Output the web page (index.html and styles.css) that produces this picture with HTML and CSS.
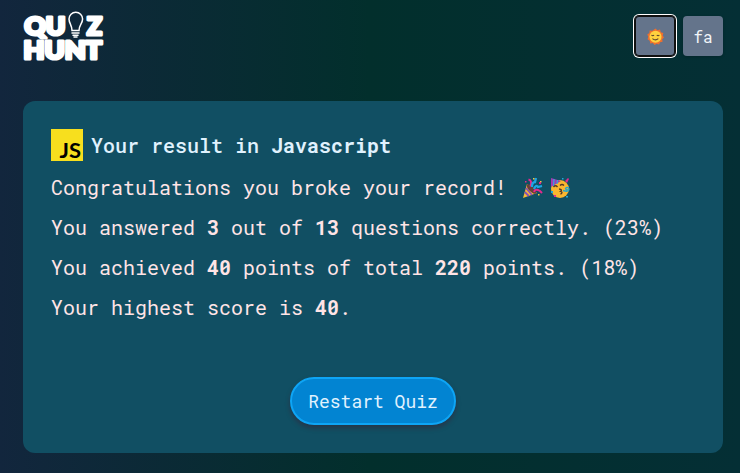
FILE: index.html
```html
<!DOCTYPE html>
<html lang="en">
<head>
<meta charset="utf-8">
<title>Quiz Hunt</title>
<link rel="stylesheet" href="styles.css">
</head>
<body>
<header class="topbar">
  <svg class="logo" viewBox="0 0 82 54" role="img" aria-label="Quiz Hunt">
    <g class="logo-text">
      <text x="1.500" y="24.500" textLength="41" lengthAdjust="spacingAndGlyphs">QU</text>
      <text x="64" y="24.500" textLength="15" lengthAdjust="spacingAndGlyphs">Z</text>
      <text x="0.500" y="49.300" textLength="78.500" lengthAdjust="spacingAndGlyphs">HUNT</text>
    </g>
    <g fill="none" stroke="#fff" stroke-width="1.500" stroke-linecap="round">
      <path d="M49 20.500C49 15 46 13.500 46 9a6.800 6.800 0 0 1 13.600 0C59.600 13.500 56 15 56 20.500Z"/>
      <path d="M49 23h7M50 25.300h5M51 27h3"/>
    </g>
  </svg>
  <nav class="actions">
    <button class="tool focused" aria-label="Light theme">
      <svg class="sun" viewBox="0 0 18 18">
        <path fill="#ef702d" d="M9 .5l2 2 2.800-.8.8 2.700 2.700.8-.7 2.700L18 10l-1.900 2 .4 2.500-2.600.7-1.100 2.200-2.600-.7L8 18l-1.800-2-2.800.3-.5-2.700L.6 12l.8-2.700L.3 7l2.200-1.700.3-2.700 2.900.2Z"/>
        <circle cx="9" cy="9.200" r="6.400" fill="#ffd13e"/>
        <path d="M4.700 7.600q1.500 1.200 2.800 0M10.300 7.600q1.500 1.200 2.800 0M5.800 11.200q3.200 2.800 6.200 0" fill="none" stroke="#59432c" stroke-width="1.100"/>
      </svg>
    </button>
    <button class="tool">fa</button>
  </nav>
</header>
<main class="card">
  <h1 class="title">
    <svg class="js" viewBox="0 0 32 32" role="img" aria-label="JS"><rect width="32" height="32" fill="#f7df1e"/><text x="8.500" y="29.300" textLength="21.500" lengthAdjust="spacingAndGlyphs">JS</text></svg>
    <span>Your result in <b>Javascript</b></span>
  </h1>
  <div class="stats">
    <p class="line">Congratulations you broke your record!
      <svg class="emoji party" viewBox="0 0 22 22">
        <path fill="#f8b936" d="M5 7 1 21l14-5Z"/>
        <path stroke="#8751b5" stroke-width="1.800" d="m4 11 6 7M2.800 15l4 4"/>
        <ellipse cx="9.500" cy="12" rx="2.600" ry="6.200" transform="rotate(-45 9.500 12)" fill="#68413b"/>
        <path fill="none" stroke="#e5298e" stroke-width="2" d="M6.500 2.500q4 1 2 7M12 15q1-4 6-1l2 2"/>
        <path fill="none" stroke="#1da5e4" stroke-width="2.300" d="M10 10q0-5 3-5l1-4M12 12q2-5 4-2l4-1"/>
        <path fill="#f8c63e" d="M11 1h1.500v1.500H11zM18 4h1.500v1.500H18zM16 17h1.500v1.500H16z"/>
        <path fill="#e5298e" d="M3 4h1.500v1.500H3zM17 5h2v2h-2z"/>
      </svg><svg class="emoji" viewBox="0 0 22 22">
        <circle cx="11" cy="12" r="9" fill="#fbb62f"/>
        <path fill="#a23bb1" d="M2 1 12 4 2 10Z"/><path stroke="#3da0dc" stroke-width="1.300" d="m5 2-.5 7M8.500 3 8 7"/>
        <path fill="none" stroke="#52392a" stroke-width="1.300" d="M4.500 10q2-2.500 4 0M11 8.500q2-2 4 0M10 12q4 .5 1.500 2.300 3 .7 0 3"/>
        <path fill="none" stroke="#27a6ca" stroke-width="1.400" d="M14 13.500q6 2 6-1.500-1.500-3-3.500-.5 1 2.500 2 .5"/>
        <path fill="#e5298e" d="m16 4 3-3 1 1-2 4ZM5 18h2v2H5z"/>
        <path fill="#24a6d7" d="M13 1h1.500v1.500H13zM2 14h2v2H2zM17 19h2v1.500h-2z"/>
      </svg>
    </p>
    <p class="line">You answered <b>3</b> out of <b>13</b> questions correctly. (23%)</p>
    <p class="line">You achieved <b>40</b> points of total <b>220</b> points. (18%)</p>
    <p class="line">Your highest score is <b>40</b>.</p>
  </div>
  <button class="restart">Restart Quiz</button>
</main>
</body>
</html>
```

FILE: styles.css
```css
* { box-sizing: border-box; }
body {
  margin: 0;
  min-height: 473px;
  padding: 10px 17px 20px 23px;
  background: linear-gradient(90deg, #12263d 0%, #022f2c 50%, #042f35 100%);
  font-family: "Roboto Mono", "DejaVu Sans Mono", monospace;
  color: #ffe4e6;
}
button { font-family: inherit; }
.topbar { display: flex; justify-content: space-between; align-items: flex-start; height: 91px; }
.logo { width: 82px; height: 54px; overflow: visible; }
.logo-text {
  font: 900 24px Lato, "Open Sans", sans-serif;
  fill: #fff;
  stroke: #fff;
  stroke-width: 3.2;
  stroke-linejoin: round;
}
.actions { display: flex; gap: 8px; padding-top: 6px; }
.tool {
  display: grid;
  place-items: center;
  width: 40px;
  height: 40px;
  padding: 0;
  border: 0;
  border-radius: 4px;
  background: #64748b;
  color: #f1f5f9;
  font-size: 16px;
  box-shadow: 0 1px 3px rgb(0 0 0 / 20%);
}
.focused { box-shadow: inset 0 0 0 1px #101010, 0 0 0 1px #101010, 0 0 0 2px #fff; }
.sun { width: 17px; height: 17px; }
.card {
  display: flex;
  flex-direction: column;
  height: 352px;
  padding: 28px;
  border-radius: 12px;
  background: #114f63;
}
.title {
  display: flex;
  align-items: center;
  gap: 8px;
  height: 32px;
  margin: 0;
  color: #e0f2fe;
  font-size: 20px;
  font-weight: 500;
  white-space: nowrap;
}
.js { width: 32px; height: 32px; }
.js text { font: 700 20px Lato, sans-serif; }
.stats { padding-top: 6px; }
.line {
  height: 40px;
  margin: 0;
  font-size: 20px;
  line-height: 40px;
  white-space: nowrap;
}
.emoji { width: 22px; height: 22px; margin-left: 5px; vertical-align: -4px; }
.party { margin-left: 3px; }
.restart {
  align-self: center;
  width: 166px;
  height: 48px;
  margin-top: auto;
  padding: 0;
  border: 2px solid #0ea5f5;
  border-radius: 24px;
  background: #0284d2;
  color: #e0f2fe;
  font-size: 18px;
  box-shadow: 0 3px 5px rgb(76 5 25 / 35%);
}
```
